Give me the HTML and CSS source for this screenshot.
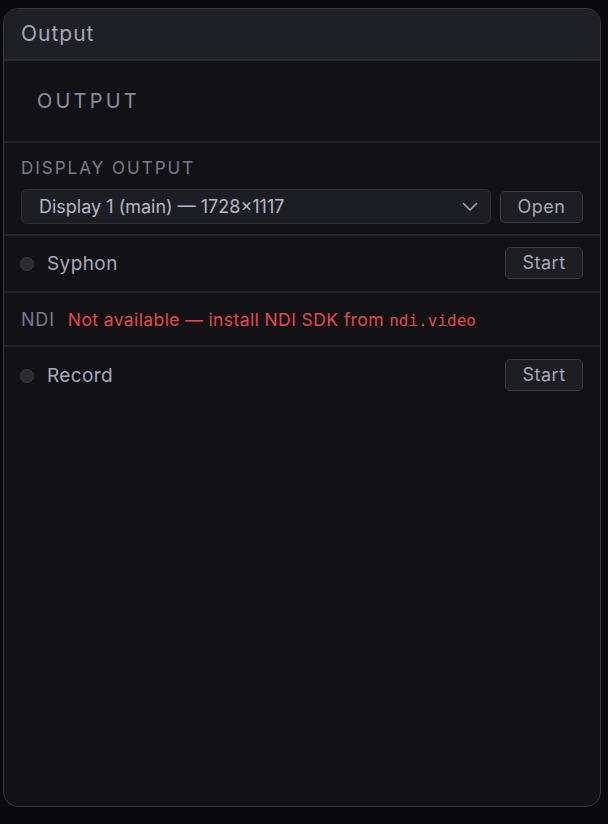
FILE: index.html
```html
<!DOCTYPE html>
<html lang="en">
<head>
  <meta charset="UTF-8" />
  <title>Output</title>
  <meta name="viewport" content="width=device-width, initial-scale=1.0">
  <link rel="stylesheet" href="styles.css">
</head>
<body>
  <div class="panel">
    <div class="panel-header">Output</div>

    <div class="panel-body">
      <!-- Titre de section -->
      <div class="section-title">OUTPUT</div>

      <!-- Sortie écran -->
      <div class="row row-display">
        <div class="label">DISPLAY OUTPUT</div>
        <div class="display-line">
          <div class="select">
            <span>Display 1 (main) — 1728×1117</span>
            <svg class="chevron" width="16" height="10" viewBox="0 0 16 10">
              <path d="M1.5 1.5 L8 8 L14.5 1.5" fill="none" stroke="#a8a8b8" stroke-width="1.6" stroke-linecap="round" stroke-linejoin="round"/>
            </svg>
          </div>
          <button class="btn btn-open">Open</button>
        </div>
      </div>

      <!-- Syphon -->
      <div class="row row-toggle">
        <span class="dot"></span>
        <span class="name">Syphon</span>
        <button class="btn">Start</button>
      </div>

      <!-- NDI -->
      <div class="row row-ndi">
        <span class="label">NDI</span>
        <span class="error">Not available — install NDI SDK from <code>ndi.video</code></span>
      </div>

      <!-- Enregistrement -->
      <div class="row row-toggle">
        <span class="dot"></span>
        <span class="name">Record</span>
        <button class="btn">Start</button>
      </div>
    </div>
  </div>
</body>
</html>
```

FILE: styles.css
```css
/* Reset et base */
* {
  box-sizing: border-box;
  margin: 0;
  padding: 0;
}
body {
  font-family: Inter, "Noto Sans", Arial, sans-serif;
  background: #0a0a0c;
  color: #b4b4c4;
  padding: 8px 7px 17px 3px;
  height: 100vh;
}

/* Panneau principal */
.panel {
  height: 799px;
  border: 1px solid #38383f;
  border-radius: 15px;
  background: #121216;
  overflow: hidden;
  display: flex;
  flex-direction: column;
}
.panel-header {
  height: 52px;
  background: #1f2025;
  border-bottom: 2px solid #2b2c31;
  padding: 12px 17px 0;
  font-size: 21px;
  letter-spacing: 1px;
  color: #a6a6b6;
}
.panel-body {
  flex: 1;
}

.section-title {
  height: 82px;
  padding: 28px 0 0 33px;
  font-size: 20px;
  letter-spacing: 3.2px;
  color: #8b8ba0;
  border-bottom: 2px solid #24252a;
}

.row {
  border-bottom: 2px solid #24252a;
  padding: 0 17px;
}
.row:last-child {
  border-bottom: none;
}
.label {
  font-size: 17px;
  letter-spacing: 2px;
  color: #7b7b8e;
}

/* Ligne sortie écran */
.row-display {
  padding-top: 15px;
  padding-bottom: 10px;
}
.display-line {
  display: flex;
  align-items: center;
  gap: 9px;
  margin-top: 11px;
}
.select {
  flex: 1;
  height: 35px;
  border: 1px solid #303137;
  border-radius: 6px;
  background: #1d1e23;
  display: flex;
  align-items: center;
  justify-content: space-between;
  padding: 0 12px 0 17px;
  font-size: 18px;
  color: #b6b6c6;
}

/* Boutons */
.btn {
  font-family: inherit;
  font-size: 18px;
  letter-spacing: 0.5px;
  color: #a8a8b8;
  background: #1d1e23;
  border: 1px solid #3a3a41;
  border-radius: 5px;
  height: 32px;
  padding: 0 12px;
}
.btn-open {
  width: 83px;
}

/* Lignes Syphon / Record */
.row-toggle {
  height: 57px;
  display: flex;
  align-items: center;
  padding-left: 16px;
}
.row-toggle .btn {
  margin-left: auto;
  width: 78px;
  margin-top: -2px;
}
.dot {
  width: 14px;
  height: 14px;
  border-radius: 50%;
  background: #2b2b31;
  border: 1px solid #3c3c43;
  margin-right: 13px;
}
.name {
  font-size: 19px;
  color: #a9a9ba;
  letter-spacing: 0.4px;
}

/* Ligne NDI */
.row-ndi {
  height: 54px;
  display: flex;
  align-items: center;
  gap: 13px;
  padding-left: 17px;
}
.row-ndi .label {
  font-size: 18px;
  letter-spacing: 0.8px;
}
.error {
  color: #e5484d;
  font-size: 17.5px;
  letter-spacing: 0.4px;
}
.error code {
  font-family: "DejaVu Sans Mono", "Liberation Mono", monospace;
  font-size: 16px;
  letter-spacing: 0;
}
```
